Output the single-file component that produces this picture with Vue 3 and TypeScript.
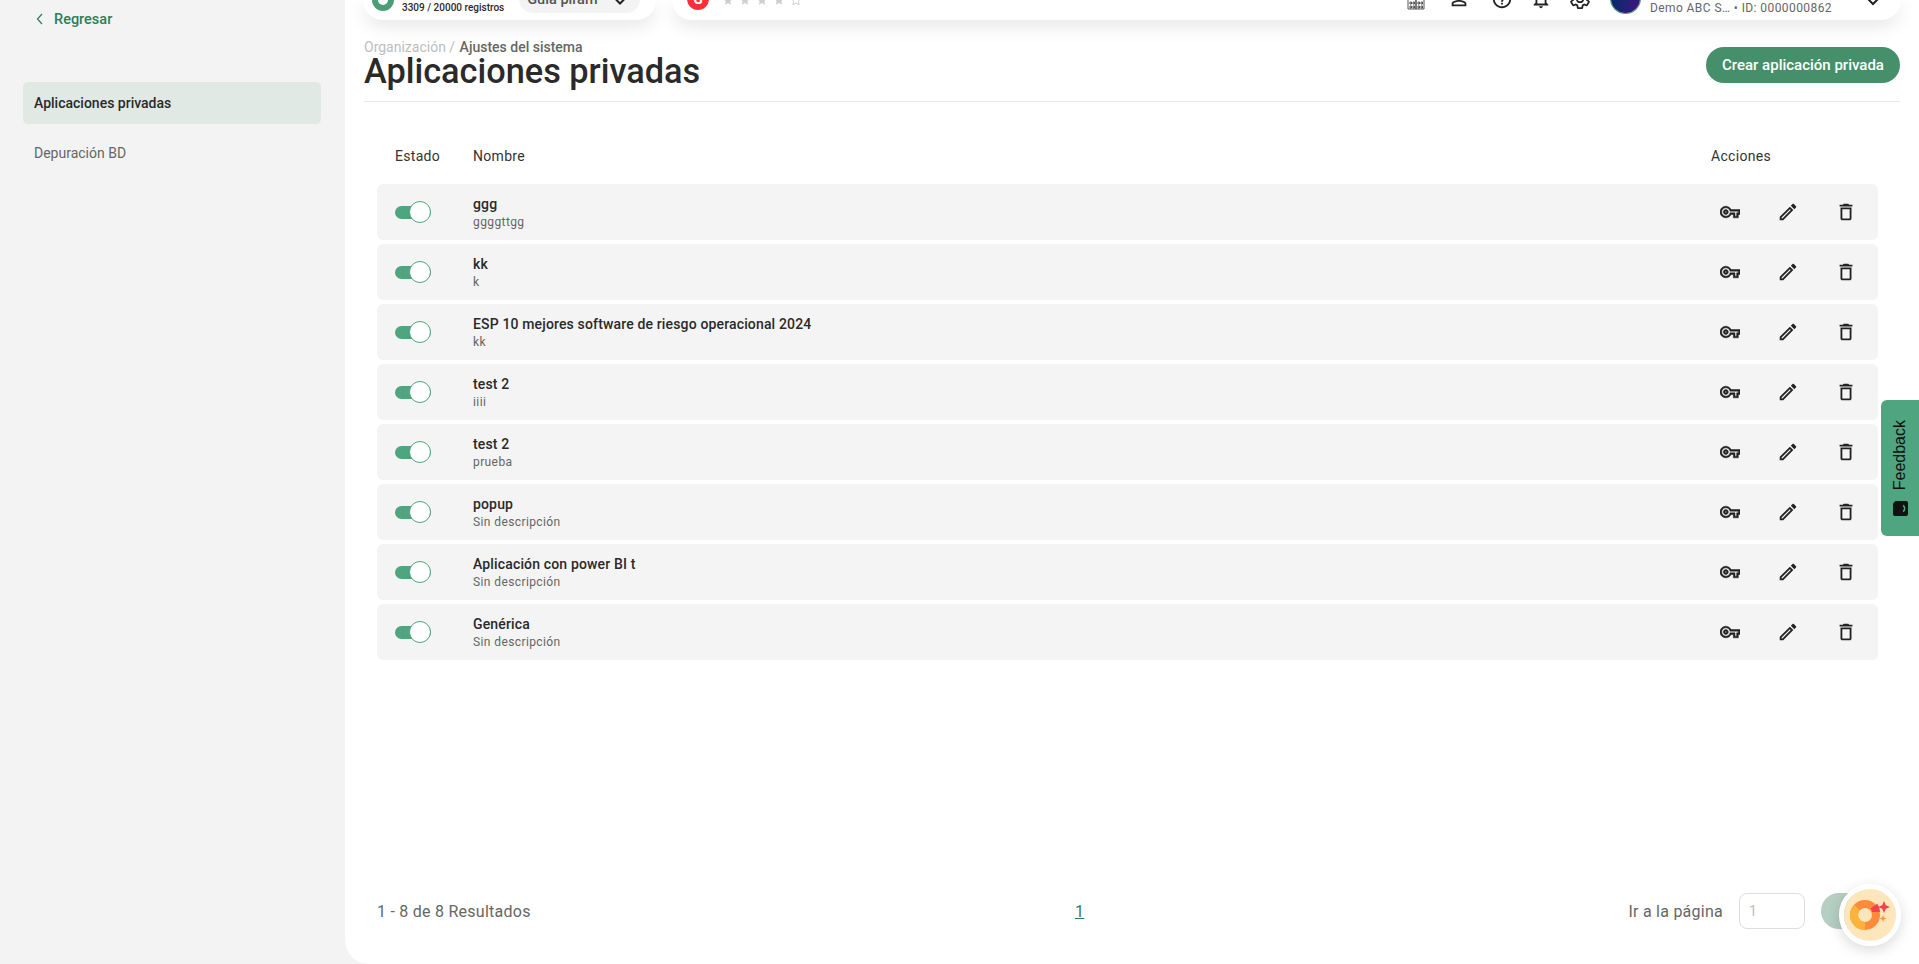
<script setup lang="ts">
interface PrivateApp {
  name: string;
  description: string;
}

const apps: PrivateApp[] = [
  { name: "ggg", description: "ggggttgg" },
  { name: "kk", description: "k" },
  { name: "ESP 10 mejores software de riesgo operacional 2024", description: "kk" },
  { name: "test 2", description: "iiii" },
  { name: "test 2", description: "prueba" },
  { name: "popup", description: "Sin descripción" },
  { name: "Aplicación con power BI t", description: "Sin descripción" },
  { name: "Genérica", description: "Sin descripción" },
];

const STAR = "M5 0l1.500 3.300 3.500.4-2.600 2.400.7 3.600L5 7.900 1.900 9.700l.7-3.600L0 3.700l3.500-.4z";
</script>

<template>
  <div class="page">
    <aside class="sidebar">
      <a class="back">
        <svg width="12" height="12" viewBox="0 0 12 12" fill="none" stroke="#2f7d57" stroke-width="1.2">
          <path d="M8 1 3.500 6 8 11" />
        </svg>
        Regresar
      </a>
      <nav class="side-nav">
        <a class="side-item active">Aplicaciones privadas</a>
        <a class="side-item">Depuración BD</a>
      </nav>
    </aside>

    <main class="main">
      <div class="topbars">
        <div class="top-card plan">
          <span class="plan-ring"></span>
          <span class="plan-count">3309 / 20000 registros</span>
          <span class="plan-select">
            Guía piram
            <svg width="14" height="10" viewBox="0 0 14 10" fill="none" stroke="#222" stroke-width="2"><path d="M3 1.500 7 5.500 11 1.500" /></svg>
          </span>
        </div>
        <div class="top-card tools">
          <span class="g2">G</span>
          <svg class="stars" width="80" height="10" viewBox="0 0 80 10">
            <path :d="STAR" fill="#cfcfcf" />
            <path :d="STAR" fill="#cfcfcf" transform="translate(17 0)" />
            <path :d="STAR" fill="#cfcfcf" transform="translate(34 0)" />
            <path :d="STAR" fill="#cfcfcf" transform="translate(51 0)" />
            <path :d="STAR" fill="none" stroke="#cfcfcf" transform="translate(68 0)" />
          </svg>
          <div class="tool-icons">
            <svg width="22" height="22" viewBox="0 0 22 22" fill="none" stroke="#444" stroke-width="0.9"><path d="M3 3h8v18H3zM11 9h8v12h-8zM5 14h1.500v2H5zM8 14h1.500v2H8zM5 18h1.500v2H5zM8 18h1.500v2H8zM13 14h1.500v2H13zM16 14h1.500v2H16zM13 18h1.500v2H13zM16 18h1.500v2H16z" /></svg>
            <svg width="22" height="22" viewBox="0 0 24 24" fill="#222"><path d="M12 5.900c1.160 0 2.100.94 2.100 2.100s-.94 2.100-2.100 2.100S9.900 9.160 9.900 8s.94-2.100 2.100-2.100m0 9c2.970 0 6.100 1.460 6.100 2.100v1.100H5.900V17c0-.64 3.130-2.100 6.100-2.100M12 4C9.790 4 8 5.790 8 8s1.790 4 4 4 4-1.790 4-4-1.790-4-4-4zm0 9c-2.670 0-8 1.340-8 4v3h16v-3c0-2.660-5.330-4-8-4z" /></svg>
            <svg width="22" height="22" viewBox="0 0 24 24" fill="#222"><path d="M11 18h2v-2h-2v2zm1-16C6.480 2 2 6.480 2 12s4.480 10 10 10 10-4.480 10-10S17.520 2 12 2zm0 18c-4.410 0-8-3.590-8-8s3.590-8 8-8 8 3.590 8 8-3.590 8-8 8zm0-14c-2.210 0-4 1.790-4 4h2c0-1.100.9-2 2-2s2 .9 2 2c0 2-3 1.750-3 5h2c0-2.250 3-2.500 3-5 0-2.210-1.790-4-4-4z" /></svg>
            <svg width="22" height="22" viewBox="0 0 24 24" fill="#222"><path d="M12 22c1.100 0 2-.9 2-2h-4c0 1.100.9 2 2 2zm6-6v-5c0-3.070-1.630-5.640-4.500-6.320V4c0-.83-.67-1.500-1.500-1.500s-1.500.67-1.500 1.500v.68C7.640 5.360 6 7.920 6 11v5l-2 2v1h16v-1l-2-2zm-2 1H8v-6c0-2.480 1.510-4.500 4-4.500s4 2.020 4 4.500v6z" /></svg>
            <svg width="22" height="22" viewBox="0 0 24 24" fill="none" stroke="#222" stroke-width="1.900"><path d="M19.430 12.980c.04-.32.07-.64.07-.98 0-.34-.03-.66-.07-.98l2.110-1.650c.19-.15.24-.42.12-.64l-2-3.460c-.09-.16-.26-.25-.44-.25-.06 0-.12.01-.17.03l-2.490 1c-.52-.4-1.080-.73-1.690-.98l-.38-2.650C14.460 2.180 14.250 2 14 2h-4c-.25 0-.46.18-.49.42l-.38 2.650c-.61.25-1.170.59-1.690.98l-2.490-1c-.06-.02-.12-.03-.18-.03-.17 0-.34.09-.43.25l-2 3.460c-.13.22-.07.49.12.64l2.110 1.650c-.04.32-.07.65-.07.98 0 .33.03.66.07.98l-2.110 1.650c-.19.15-.24.42-.12.64l2 3.460c.09.16.26.25.44.25.06 0 .12-.01.17-.03l2.490-1c.52.4 1.080.73 1.690.98l.38 2.650c.03.24.24.42.49.42h4c.25 0 .46-.18.49-.42l.38-2.650c.61-.25 1.170-.59 1.690-.98l2.490 1c.06.02.12.03.18.03.17 0 .34-.09.43-.25l2-3.460c.12-.22.07-.49-.12-.64l-2.110-1.650zM12 15.500c-1.930 0-3.500-1.570-3.500-3.500s1.570-3.500 3.500-3.500 3.500 1.570 3.500 3.500-1.570 3.500-3.500 3.500z" /></svg>
          </div>
          <span class="avatar"></span>
          <span class="org">Demo ABC S… • ID: 0000000862</span>
          <svg class="org-chevron" width="16" height="12" viewBox="0 0 16 12" fill="none" stroke="#222" stroke-width="2"><path d="M2 2 8 8 14 2" /></svg>
        </div>
      </div>

      <header class="head">
        <div class="head-text">
          <div class="crumbs"><span>Organización /</span> <b>Ajustes del sistema</b></div>
          <h1>Aplicaciones privadas</h1>
        </div>
        <button class="create">Crear aplicación privada</button>
      </header>

      <section class="table">
        <div class="cols">
          <span class="col-state">Estado</span>
          <span class="col-name">Nombre</span>
          <span class="col-actions">Acciones</span>
        </div>
        <div v-for="(app, i) in apps" :key="i" class="row">
          <div class="col-state">
            <span class="switch"><span class="knob"></span></span>
          </div>
          <div class="col-name">
            <div class="app-name">{{ app.name }}</div>
            <div class="app-desc">{{ app.description }}</div>
          </div>
          <div class="row-actions">
            <span class="action"><svg width="20" height="20" viewBox="0 0 24 24" fill="#222" stroke="#222" stroke-width="0.6"><path d="M22 19h-6v-4h-2.680c-1.140 2.420-3.600 4-6.320 4-3.860 0-7-3.140-7-7s3.140-7 7-7c2.720 0 5.170 1.580 6.320 4H24v6h-2v4zm-4-2h2v-4h2v-2H11.980l-.23-.67C11.060 8.340 9.150 7 7 7c-2.760 0-5 2.240-5 5s2.240 5 5 5c2.150 0 4.060-1.340 4.750-3.330l.23-.67H18v4zM7 15c-1.650 0-3-1.350-3-3s1.350-3 3-3 3 1.350 3 3-1.350 3-3 3zm0-4c-.55 0-1 .45-1 1s.45 1 1 1 1-.45 1-1-.45-1-1-1z" /></svg></span>
            <span class="action"><svg width="22" height="22" viewBox="0 0 24 24" fill="#222"><path d="M3 17.250V21h3.750L17.810 9.940l-3.750-3.750L3 17.250zM5.920 19H5v-.92l9.060-9.060.92.92L5.920 19zM20.710 5.630l-2.340-2.340c-.2-.2-.45-.29-.71-.29s-.51.1-.7.29l-1.830 1.830 3.750 3.750 1.830-1.830c.39-.39.39-1.020 0-1.410z" /></svg></span>
            <span class="action"><svg width="22" height="22" viewBox="0 0 24 24" fill="#222"><path d="M16 9v10H8V9h8m-1.500-6h-5l-1 1H5v2h14V4h-3.500l-1-1zM18 7H6v12c0 1.100.9 2 2 2h8c1.100 0 2-.9 2-2V7z" /></svg></span>
          </div>
        </div>
      </section>

      <footer class="pager">
        <span class="results">1 - 8 de 8 Resultados</span>
        <a class="page-link">1</a>
        <div class="goto">
          <span>Ir a la página</span>
          <span class="page-input">1</span>
          <span class="go"></span>
        </div>
      </footer>
    </main>

    <div class="feedback">
      <span class="feedback-label">Feedback</span>
      <svg width="15" height="15" viewBox="0 0 15 15">
        <path d="M0 2.500 2.500 0H13a2 2 0 0 1 2 2v11a2 2 0 0 1-2 2H2a2 2 0 0 1-2-2z" fill="#111" />
        <path d="M5 4.500a3.500 3.500 0 0 0 0 6" transform="rotate(180 7.500 7.500)" fill="none" stroke="#4fa57f" stroke-width="1.500" />
      </svg>
    </div>

    <div class="assistant">
      <svg width="52" height="52" viewBox="0 0 52 52">
        <circle cx="26" cy="26" r="26" fill="#fde6bc" />
        <circle cx="21" cy="26" r="11" fill="none" stroke="#ff8a3c" stroke-width="8" />
        <path d="M21 37a11 11 0 0 1-8-18.500" fill="none" stroke="#fdb23a" stroke-width="8" />
        <path d="M30 17a11 11 0 0 1 2 6" fill="none" stroke="#f2434d" stroke-width="8" />
        <path d="M40 12l1.800 4.200L46 18l-4.200 1.800L40 24l-1.800-4.200L34 18l4.200-1.800z" fill="#f2434d" />
        <path d="M39 26l1 2.500 2.500 1-2.500 1-1 2.500-1-2.500-2.500-1 2.500-1z" fill="#fb9a3c" />
      </svg>
    </div>
  </div>
</template>

<style>
html,
body {
  margin: 0;
  background: #f3f3f3;
}
</style>

<style scoped>
.page {
  display: flex;
  height: 964px;
  overflow: hidden;
  position: relative;
  background: #f3f3f3;
  font-family: Roboto, "Liberation Sans", sans-serif;
  color: #2a2a2a;
}

.sidebar {
  width: 345px;
  flex: none;
  box-sizing: border-box;
  padding: 9px 24px 0 23px;
}
.back {
  display: flex;
  align-items: center;
  gap: 8px;
  padding-left: 11px;
  height: 20px;
  font-size: 14.5px;
  font-weight: 500;
  color: #2f7d57;
}
.side-nav {
  margin-top: 53px;
  display: flex;
  flex-direction: column;
  gap: 8px;
}
.side-item {
  height: 42px;
  line-height: 42px;
  padding-left: 11px;
  border-radius: 5px;
  font-size: 14px;
  color: #666;
}
.side-item.active {
  background: #e1e9e4;
  color: #2a2a2a;
  font-weight: 500;
}

.main {
  flex: 1;
  min-width: 0;
  background: #fff;
  border-radius: 0 0 0 24px;
  padding: 0 19px;
  position: relative;
  display: flex;
  flex-direction: column;
}

.topbars {
  display: flex;
  gap: 16px;
  height: 20px;
  margin: 0 -1px 0 -1px;
}
.top-card {
  background: #fff;
  border-radius: 0 0 24px 24px;
  box-shadow: 0 6px 18px rgba(0, 0, 0, 0.1);
  display: flex;
  align-items: flex-end;
  box-sizing: border-box;
  height: 20px;
}
.plan {
  width: 293px;
  flex: none;
  padding-left: 9px;
}
.plan-ring {
  width: 22px;
  height: 22px;
  box-sizing: border-box;
  border: 6px solid #4d9c78;
  border-radius: 50%;
  margin-bottom: 9px;
  flex: none;
}
.plan-count {
  margin-left: 8px;
  margin-bottom: 5px;
  font-size: 10px;
  font-weight: 500;
  line-height: 14px;
  white-space: nowrap;
}
.plan-select {
  margin-left: 15px;
  margin-bottom: 7px;
  height: 20px;
  width: 121px;
  padding: 0 13px 6px 8px;
  box-sizing: border-box;
  flex: none;
  border-radius: 0 0 14px 14px;
  background: #f3f3f3;
  display: flex;
  align-items: flex-end;
  justify-content: space-between;
  font-size: 14.5px;
  font-weight: 500;
  color: #555;
  line-height: 14px;
}
.plan-select svg {
  margin-bottom: -1px;
}
.tools {
  flex: 1;
  padding: 0 20px 0 15px;
}
.g2 {
  width: 22px;
  height: 22px;
  border-radius: 50%;
  background: #ff2d3a;
  color: #fff;
  font-size: 14px;
  font-weight: 700;
  line-height: 22px;
  text-align: center;
  margin-bottom: 10px;
  flex: none;
}
.stars {
  margin-left: 14px;
  margin-bottom: 15px;
  flex: none;
}
.tool-icons {
  margin-left: auto;
  display: flex;
  gap: 17px;
  margin-bottom: 10px;
}
.tool-icons svg:nth-child(-n + 2) {
  margin-right: 4px;
}
.avatar {
  width: 29px;
  height: 29px;
  border-radius: 50%;
  margin-left: 20px;
  margin-bottom: 7px;
  background: linear-gradient(110deg, #0c2a6a 30%, #4a0f85);
  box-shadow: 0 0 0 1px #4d9c78;
  flex: none;
}
.org {
  margin-left: 10px;
  margin-bottom: 5px;
  font-size: 12px;
  letter-spacing: 0.42px;
  color: #666;
  line-height: 14px;
  white-space: nowrap;
}
.org-chevron {
  margin-left: 33px;
  margin-bottom: 12px;
  flex: none;
}

.head {
  margin-top: 18px;
  height: 63px;
  border-bottom: 1px solid #e8e8e8;
  display: flex;
  justify-content: space-between;
  align-items: flex-start;
}
.crumbs {
  font-size: 14px;
  line-height: 18px;
  color: #bdbdbd;
}
.crumbs b {
  font-weight: 500;
  color: #666;
  margin-left: 1px;
}
h1 {
  margin: -5px 0 0;
  font-size: 34.3px;
  line-height: 40px;
  font-weight: 500;
  color: #2a2a2a;
}
.create {
  margin-top: 9px;
  height: 36px;
  width: 194px;
  border: 0;
  border-radius: 18px;
  background: #458f6b;
  color: #fff;
  font: 500 15px Roboto, sans-serif;
  padding: 0;
}

.table {
  margin: 32px 22px 0 13px;
  display: flex;
  flex-direction: column;
  gap: 4px;
}
.cols {
  display: flex;
  align-items: center;
  height: 44px;
  margin-bottom: 2px;
  font-size: 14px;
  letter-spacing: 0.3px;
  color: #333;
}
.row {
  display: flex;
  align-items: center;
  height: 56px;
  background: #f4f4f4;
  border-radius: 6px;
}
.col-state {
  width: 96px;
  padding-left: 18px;
  box-sizing: border-box;
  flex: none;
}
.col-name {
  flex: 1;
  min-width: 0;
}
.col-actions {
  width: 167px;
  flex: none;
}
.switch {
  display: block;
  position: relative;
  width: 36px;
  height: 13px;
  border-radius: 7px;
  background: #4fa57f;
}
.knob {
  position: absolute;
  right: 0;
  top: -4.5px;
  width: 22px;
  height: 22px;
  box-sizing: border-box;
  border-radius: 50%;
  background: #fff;
  border: 1px solid #4fa57f;
}
.app-name {
  font-size: 14px;
  font-weight: 500;
  line-height: 19px;
  letter-spacing: 0.15px;
}
.app-desc {
  margin-top: 1px;
  font-size: 12px;
  line-height: 15px;
  letter-spacing: 0.4px;
  color: #666;
}
.row-actions {
  width: 167px;
  flex: none;
  display: flex;
  gap: 36px;
  padding-left: 8px;
  box-sizing: border-box;
}
.action {
  width: 22px;
  height: 22px;
  display: flex;
  align-items: center;
  justify-content: center;
}

.pager {
  margin: auto 19px 0 13px;
  height: 106px;
  flex: none;
  display: flex;
  justify-content: space-between;
  align-items: center;
  font-size: 16px;
  letter-spacing: 0.25px;
  color: #666;
}
.page-link {
  color: #2f7d57;
  text-decoration: underline;
}
.goto {
  display: flex;
  align-items: center;
  gap: 16px;
}
.page-input {
  width: 66px;
  height: 36px;
  line-height: 34px;
  box-sizing: border-box;
  border: 1px solid #ddd;
  border-radius: 8px;
  padding-left: 9px;
  font-size: 14px;
  color: #bdbdbd;
}
.go {
  width: 60px;
  height: 36px;
  border-radius: 18px;
  background: #b5cfc2;
}

.feedback {
  position: absolute;
  right: 0;
  top: 400px;
  width: 38px;
  height: 136px;
  background: #4fa57f;
  border-radius: 6px 0 0 6px;
  display: flex;
  flex-direction: column;
  align-items: center;
  justify-content: flex-end;
  padding-bottom: 20px;
  box-sizing: border-box;
  gap: 11px;
}
.feedback-label {
  writing-mode: vertical-rl;
  transform: rotate(180deg);
  font: 16px "Liberation Sans", Arial, sans-serif;
  color: #111;
}

.assistant {
  position: absolute;
  right: 18px;
  bottom: 18px;
  width: 52px;
  height: 52px;
  border: 5px solid #fff;
  border-radius: 50%;
  box-shadow: 0 4px 14px rgba(0, 0, 0, 0.15);
}
.assistant svg {
  display: block;
}
</style>
